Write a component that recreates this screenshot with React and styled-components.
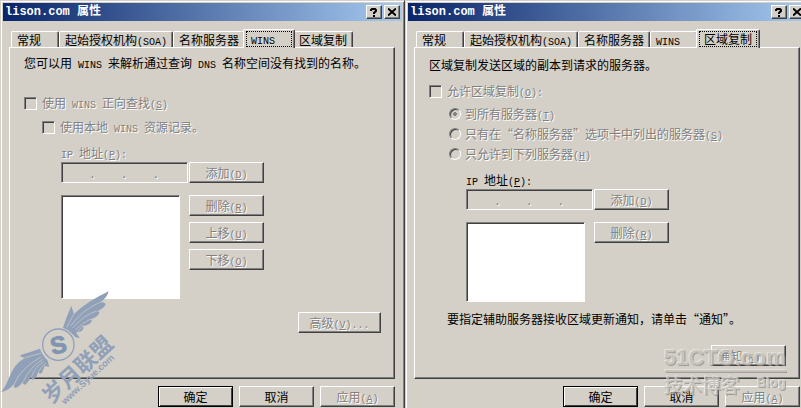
import React, { useId } from "react";
import styled, { createGlobalStyle, css } from "styled-components";

const face = "#d4d0c8";
const shade = "#808080";
const dark = "#404040";

const GlobalStyle = createGlobalStyle`
  * { box-sizing: border-box; }
  body {
    margin: 0;
    overflow: hidden;
    background: ${face};
    color: #000;
    font: 12px/16px "Noto Sans CJK SC", sans-serif;
  }
  button, input, select { font: inherit; margin: 0; padding: 0; border-radius: 0; }
  p { margin: 0; }
`;

const Desktop = styled.main`
  position: relative;
  display: flex;
  align-items: stretch;
`;

const Window = styled.section`
  flex: 1 0 405px;
  display: flex;
  flex-direction: column;
  padding: 2px;
  background: ${face};
  border: 1px solid;
  border-color: ${face} ${dark} ${dark} ${face};
  box-shadow: inset 1px 1px #fff, inset -1px -1px ${shade};
`;

const TitleBar = styled.header`
  display: flex;
  align-items: center;
  gap: 2px;
  height: 18px;
  padding: 0 2px;
  color: #fff;
  background: linear-gradient(to right, #0a246a, #a6caf0);
`;

const Title = styled.h1`
  flex: 1;
  margin: 0;
  font: bold 12px/16px "Liberation Mono", "Noto Sans CJK SC", monospace;
  white-space: pre;
`;

const raised = css`
  background: ${face};
  border: 1px solid;
  border-color: #fff ${dark} ${dark} #fff;
  box-shadow: inset -1px -1px ${shade};
`;

const CaptionButton = styled.button`
  ${raised}
  display: grid;
  place-items: center;
  width: 16px;
  height: 14px;
`;

const Body = styled.div`
  flex: 1;
  display: flex;
  flex-direction: column;
  padding: 8px 7px 0 6px;
`;

const TabStrip = styled.div`
  display: flex;
  align-items: flex-end;
  height: 18px;
  padding-left: 2px;
`;

const Tab = styled.button`
  height: 16px;
  min-width: 48px;
  padding: 0 5px;
  text-align: left;
  line-height: 15px;
  white-space: pre;
  background: ${face};
  border: solid;
  border-width: 1px 1px 0 1px;
  border-color: #fff ${dark} #fff #fff;
  border-radius: 2px 2px 0 0;
  box-shadow: inset -1px 0 ${shade};
  ${(p) =>
    p.$active &&
    css`
      z-index: 1;
      height: 19px;
      min-width: 52px;
      margin: 0 -2px -1px;
      padding: 1px 2px 1px 2px;
    `}
`;

const FocusBox = styled.span`
  display: block;
  height: 16px;
  padding: 0 4px;
  line-height: 14px;
  border: 1px dotted #000;
`;

const Panel = styled.div`
  flex: 1;
  display: flex;
  flex-direction: column;
  padding: ${(p) => p.$top}px 13px 12px 14px;
  border: 1px solid;
  border-color: #fff ${dark} ${dark} #fff;
  box-shadow: inset -1px -1px ${shade};
`;

const Block = styled.div`
  display: flex;
  align-items: flex-start;
  margin-top: ${(p) => p.$before || 0}px;
  padding-left: ${(p) => p.$indent || 0}px;
  gap: ${(p) => p.$gap || 0}px;
`;

const Stack = styled.div`
  display: flex;
  flex-direction: column;
  gap: ${(p) => p.$gap}px;
`;

const embossed = css`
  color: ${shade};
  text-shadow: 1px 1px #fff;
`;

const Label = styled.label`
  white-space: pre;
  ${(p) => p.$disabled && embossed}
`;

const Latin = styled.span`
  font-family: "Liberation Mono", monospace;
  font-size: 10px;
  line-height: 0;
  white-space: pre;
`;

const CheckBox = styled.input`
  appearance: none;
  width: 13px;
  height: 13px;
  margin-top: 2px;
  border: 1px solid;
  border-color: ${shade} #fff #fff ${shade};
  box-shadow: inset 1px 1px ${dark};
`;

const Radio = styled.input`
  appearance: none;
  width: 12px;
  height: 12px;
  margin-top: 2px;
  border: 1px solid;
  border-color: ${shade} #fff #fff ${shade};
  border-radius: 50%;
  box-shadow: inset 1px 1px ${dark};
  &:checked {
    background: radial-gradient(circle, ${shade} 2px, transparent 2px);
  }
`;

const PushButton = styled.button`
  ${raised}
  width: ${(p) => p.$width || 75}px;
  height: 21px;
  white-space: pre;
  line-height: 16px;
  color: #000;
  &:disabled { ${embossed} }
  ${(p) =>
    p.$default &&
    css`
      border-color: #000;
      box-shadow: inset 1px 1px #fff, inset -1px -1px ${dark};
    `}
`;

const sunken = css`
  border: 1px solid;
  border-color: ${shade} #fff #fff ${shade};
  box-shadow: inset 1px 1px ${dark};
`;

const AddressBox = styled.div`
  ${sunken}
  display: flex;
  align-items: center;
  width: 127px;
  height: 21px;
  padding: 0 1px;
  color: ${shade};
`;

const Octet = styled.input`
  flex: 1;
  min-width: 0;
  width: 0;
  height: 16px;
  border: 0;
  background: transparent;
`;

const Dot = styled.span`
  width: 4px;
  line-height: 12px;
  ${embossed}
`;

const ListBox = styled.select`
  ${sunken}
  appearance: none;
  width: 119px;
  height: ${(p) => p.$height}px;
  background: #fff;
  opacity: 1;
`;

const Trailing = styled.div`
  display: flex;
  justify-content: flex-end;
  gap: 6px;
  margin-top: ${(p) => p.$before}px;
`;

const WingMark = styled.svg`
  position: absolute;
  left: 0;
  top: 288px;
  width: 126px;
  height: 120px;
  pointer-events: none;
`;

const BlogMark = styled.svg`
  position: absolute;
  left: 660px;
  top: 338px;
  width: 134px;
  height: 64px;
  pointer-events: none;
  fill: #c2bfba;
  opacity: 0.75;
  filter: drop-shadow(-1px -1px 0 #eceae6) drop-shadow(1px 1px 0 #8f8d89);
`;

/* Latin runs are set narrower than the Chinese text; "&" marks the access key. */
function Text({ children }) {
  return children.split(/([\x20-\x7e]+)/).map((run, i) => {
    if (i % 2 === 0) return run;
    const at = run.indexOf("&");
    if (at < 0) return <Latin key={i}>{run}</Latin>;
    return (
      <Latin key={i}>
        {run.slice(0, at)}
        <u>{run[at + 1]}</u>
        {run.slice(at + 2)}
      </Latin>
    );
  });
}

function Check({ label, before, indent }) {
  const id = useId();
  return (
    <Block $before={before} $indent={indent} $gap={5}>
      <CheckBox type="checkbox" id={id} disabled />
      <Label htmlFor={id} $disabled><Text>{label}</Text></Label>
    </Block>
  );
}

function Option({ label, checked }) {
  const id = useId();
  return (
    <Block $gap={4}>
      <Radio type="radio" name="transfer" id={id} defaultChecked={checked} disabled />
      <Label htmlFor={id} $disabled><Text>{label}</Text></Label>
    </Block>
  );
}

function AddressRow({ disabled }) {
  const id = useId();
  return (
    <>
      <Block $before={10} $indent={37}>
        <Label htmlFor={id} $disabled={disabled}><Text>{"IP 地址(&P):"}</Text></Label>
      </Block>
      <Block $before={1} $indent={37} $gap={1}>
        <AddressBox>
          <Octet id={id} disabled />
          <Dot>.</Dot>
          <Octet aria-label="IP 2" disabled />
          <Dot>.</Dot>
          <Octet aria-label="IP 3" disabled />
          <Dot>.</Dot>
          <Octet aria-label="IP 4" disabled />
        </AddressBox>
        <PushButton disabled><Text>{"添加(&D)"}</Text></PushButton>
      </Block>
    </>
  );
}

function AddressList({ height, actions }) {
  return (
    <Block $before={12} $indent={37} $gap={9}>
      <ListBox size={5} $height={height} aria-label="IP 地址" disabled />
      <Stack $gap={6}>
        {actions.map((a) => (
          <PushButton key={a} disabled><Text>{a}</Text></PushButton>
        ))}
      </Stack>
    </Block>
  );
}

const tabs = ["常规", "起始授权机构(SOA)", "名称服务器", "WINS", "区域复制"];

function PropertySheet({ active, top, children }) {
  return (
    <Window>
      <TitleBar>
        <Title>lison.com 属性</Title>
        <CaptionButton aria-label="帮助">
          <svg width="8" height="9" viewBox="0 0 8 9" fill="none" stroke="#000" strokeWidth="2">
            <path d="M1 3V2l1-1h3l1 1v1L4 5v1M4 7v2" />
          </svg>
        </CaptionButton>
        <CaptionButton aria-label="关闭">
          <svg width="8" height="8" viewBox="0 0 8 8" stroke="#000" strokeWidth="2">
            <path d="M0 0.5l8 7M8 0.5l-8 7" />
          </svg>
        </CaptionButton>
      </TitleBar>
      <Body>
        <TabStrip role="tablist">
          {tabs.map((t) => (
            <Tab key={t} role="tab" aria-selected={t === active} $active={t === active}>
              {t === active ? <FocusBox><Text>{t}</Text></FocusBox> : <Text>{t}</Text>}
            </Tab>
          ))}
        </TabStrip>
        <Panel role="tabpanel" $top={top}>{children}</Panel>
        <Trailing $before={7}>
          <PushButton $default>确定</PushButton>
          <PushButton>取消</PushButton>
          <PushButton disabled><Text>{"应用(&A)"}</Text></PushButton>
        </Trailing>
      </Body>
    </Window>
  );
}

function WingWatermark() {
  return (
    <WingMark viewBox="0 54 378 360" fill="#8fa0b8">
      <g>
        <path d="M188 176Q200 138 214 108Q218 120 222 132Q262 94 326 64Q322 84 300 97Q318 94 316 106Q306 120 288 124Q304 122 294 136Q284 146 270 148Q282 150 268 162Q258 168 246 168Q256 172 244 184L228 188L240 204L226 202Q212 184 188 176Z" />
        <path d="M120 236Q90 246 60 256Q64 264 74 264Q40 284 28 322Q20 344 4 366Q26 362 42 342Q40 352 46 354Q62 348 70 332Q66 344 76 344Q88 334 94 318Q92 332 102 328Q112 318 116 302Q116 316 126 308L134 288L148 290L142 270Q128 258 120 236Z" />
        <path
          fill="none"
          stroke="#d4d0c8"
          strokeWidth="2"
          d="M200 172Q216 140 224 130M212 168Q248 118 302 96M218 174Q252 134 290 123M226 180Q250 156 272 147M232 188Q240 176 248 168M74 264Q100 254 124 250M42 344Q60 296 124 260M70 334Q88 294 128 268M94 320Q106 290 132 274M116 304Q124 288 138 280"
        />
      </g>
      <circle cx="175" cy="224" r="52" fill="#d4d0c8" />
      <circle cx="175" cy="224" r="47" fill="none" stroke="#8fa0b8" strokeWidth="4" />
      <text x="175" y="250" textAnchor="middle" fontSize="72" fontWeight="bold" fontFamily="Liberation Sans, sans-serif" fill="#8195b1" stroke="#8195b1" strokeWidth="3" transform="rotate(-12 175 224)">S</text>
      <g fontFamily="Noto Sans CJK SC, sans-serif" fontWeight="bold" transform="translate(154 404) rotate(-43)">
        <text fontSize="65">岁月联盟</text>
        <text x="30" y="28" fontSize="28" fontFamily="Liberation Sans, sans-serif">www.Syue.com</text>
      </g>
    </WingMark>
  );
}

function BlogWatermark() {
  return (
    <BlogMark viewBox="0 0 134 64">
      <text x="4" y="27" fontSize="22" fontWeight="bold" fontFamily="Liberation Sans, sans-serif">51CTO.com</text>
      <path d="M5 32h121v2H5z" />
      <text x="4" y="55" fontSize="19" fontFamily="Noto Sans CJK SC, sans-serif">技术博客</text>
      <text x="97" y="49" fontSize="13" fontWeight="bold" fontFamily="Liberation Sans, sans-serif">Blog</text>
    </BlogMark>
  );
}

export default function App() {
  return (
    <Desktop>
      <GlobalStyle />
      <PropertySheet active="WINS" top={7}>
        <p><Text>您可以用 WINS 来解析通过查询 DNS 名称空间没有找到的名称。</Text></p>
        <Check label="使用 WINS 正向查找(&S)" before={24} />
        <Check label="使用本地 WINS 资源记录。" before={8} indent={18} />
        <AddressRow disabled />
        <AddressList height={104} actions={["删除(&R)", "上移(&U)", "下移(&O)"]} />
        <Trailing $before={13}>
          <PushButton $width={83} disabled><Text>{"高级(&V)..."}</Text></PushButton>
        </Trailing>
      </PropertySheet>
      <PropertySheet active="区域复制" top={9}>
        <p>区域复制发送区域的副本到请求的服务器。</p>
        <Check label="允许区域复制(&O):" before={10} />
        <Block $before={7} $indent={20}>
          <Stack $gap={4}>
            <Option label="到所有服务器(&T)" checked />
            <Option label="只有在“名称服务器”选项卡中列出的服务器(&S)" />
            <Option label="只允许到下列服务器(&H)" />
          </Stack>
        </Block>
        <AddressRow />
        <AddressList height={80} actions={["删除(&R)"]} />
        <Block $before={9} $indent={18}>
          <p>要指定辅助服务器接收区域更新通知，请单击“通知”。</p>
        </Block>
        <Trailing $before={18}>
          <PushButton disabled><Text>{"通知(&N)..."}</Text></PushButton>
        </Trailing>
      </PropertySheet>
      <WingWatermark />
      <BlogWatermark />
    </Desktop>
  );
}
